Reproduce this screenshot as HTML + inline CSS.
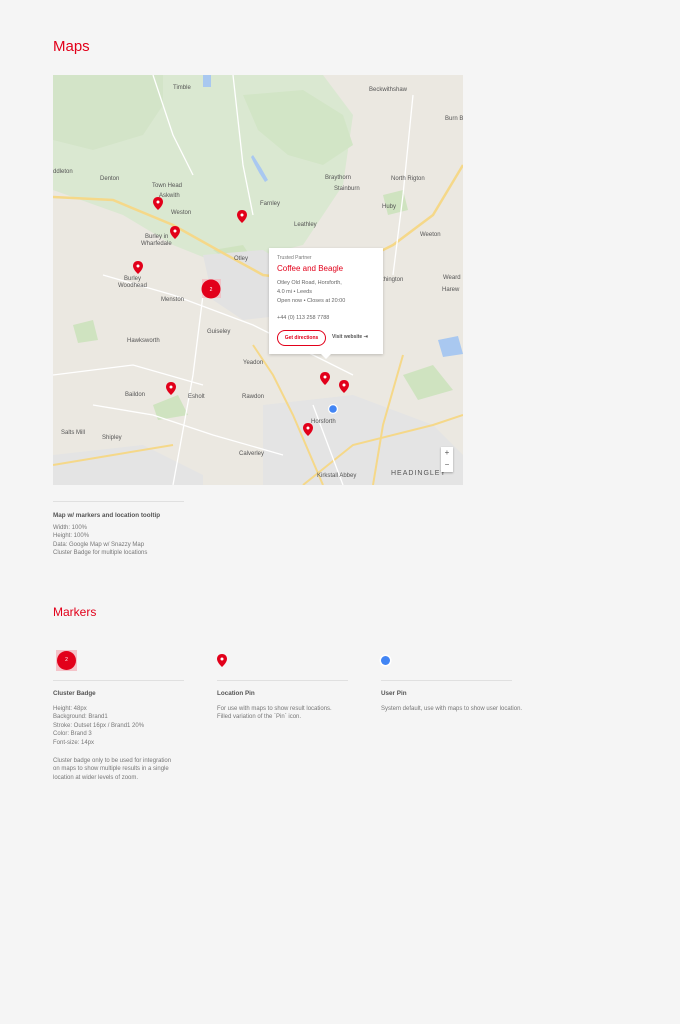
<!DOCTYPE html>
<html><head><meta charset="utf-8"><style>
body{margin:0;background:#f5f5f5;font-family:"Liberation Sans",sans-serif;width:680px;height:1024px;position:relative;overflow:hidden}
.h{position:absolute;left:53px;color:#e2001a;font-size:15px}
.map{position:absolute;left:53px;top:75px;width:410px;height:410px;overflow:hidden;background:#ebe8e1}
.lbl{font-family:"Liberation Sans",sans-serif;font-size:6px;fill:#555}
.tip{position:absolute;left:269px;top:248px;width:114px;height:106px;background:#fff;box-shadow:0 1px 3px rgba(0,0,0,.2);font-size:5px;color:#777}
.tip:after{content:"";position:absolute;left:52px;bottom:-5px;border:5px solid transparent;border-bottom:0;border-top-color:#fff}
.t{position:absolute;left:8px}
.sm{font-size:5.5px;color:#666;line-height:9px}
.rule{position:absolute;height:1px;background:#e0e0e0}
.cap{position:absolute;font-size:6px;color:#777;line-height:8.6px}
.cap b{color:#555;font-size:6.3px}
</style></head><body>
<div class="h" style="top:38px">Maps</div>
<div class="map">
<svg width="410" height="410" viewBox="0 0 410 410">
<path d="M0 0H270L300 40L290 110L250 170L210 180L170 190L120 170L70 140L0 115Z" fill="#dae8d1"/>
<path d="M190 20L250 15L290 40L300 70L270 90L235 80L205 55Z" fill="#d2e5c6"/>
<path d="M0 0H110V30L90 60L40 75L0 65Z" fill="#d3e4c8"/>
<path d="M160 175l30 -5l10 15l-15 8z M330 120l20 -5l5 20l-20 5z M230 260l25 -5l5 20l-25 3z M100 330l25 -10l10 20l-30 5z M350 300l30 -10l20 25l-35 10z M20 250l20 -5l5 20l-20 3z" fill="#cfe3c0"/>
<path d="M150 180L210 175L240 195L250 220L235 240L190 245L160 225Z" fill="#e2e2e2"/>
<path d="M210 330L300 320L380 350L410 380V410H210Z" fill="#e4e4e4"/>
<path d="M0 380L90 370L150 400V410H0Z" fill="#e4e4e4"/>
<path d="M200 80q8 12 15 25l-3 2q-8-12-14-25z M150 0h8v12h-8z M385 265l20 -4l5 18l-20 3z" fill="#a9c8f0"/>
<path d="M0 122L60 125L120 150L170 178L210 200L250 205L300 190L340 170L380 140L410 90" stroke="#f5d889" stroke-width="2.5" fill="none"/>
<path d="M270 410L240 340L220 300L200 270 M250 410L300 370L380 350L410 340 M0 390L60 380L120 370 M320 410L330 350L350 280" stroke="#f5d889" stroke-width="2" fill="none"/>
<path d="M100 0L120 60L140 100 M50 200L120 220L200 250L300 300 M0 300L80 290L150 310 M150 220L140 300L120 410 M360 20L350 120L340 200 M40 330L100 340L160 360L230 380 M260 330L290 410 M180 0L190 90L200 140" stroke="#fff" stroke-width="1.3" fill="none"/>
<text class="lbl" x="120" y="14">Timble</text><text class="lbl" x="316" y="16">Beckwithshaw</text><text class="lbl" x="392" y="45">Burn B</text>
<text class="lbl" x="0" y="98">ddleton</text><text class="lbl" x="47" y="105">Denton</text><text class="lbl" x="99" y="112">Town Head</text><text class="lbl" x="106" y="122">Askwith</text>
<text class="lbl" x="118" y="139">Weston</text><text class="lbl" x="207" y="130">Farnley</text><text class="lbl" x="272" y="104">Braythorn</text><text class="lbl" x="281" y="115">Stainburn</text><text class="lbl" x="338" y="105">North Rigton</text><text class="lbl" x="329" y="133">Huby</text>
<text class="lbl" x="241" y="151">Leathley</text><text class="lbl" x="367" y="161">Weeton</text><text class="lbl" x="92" y="163">Burley in</text><text class="lbl" x="88" y="170">Wharfedale</text>
<text class="lbl" x="181" y="185">Otley</text><text class="lbl" x="71" y="205">Burley</text><text class="lbl" x="65" y="212">Woodhead</text><text class="lbl" x="108" y="226">Menston</text>
<text class="lbl" x="154" y="258">Guiseley</text><text class="lbl" x="74" y="267">Hawksworth</text><text class="lbl" x="190" y="289">Yeadon</text><text class="lbl" x="72" y="321">Baildon</text><text class="lbl" x="135" y="323">Esholt</text><text class="lbl" x="189" y="323">Rawdon</text>
<text class="lbl" x="8" y="359">Salts Mill</text><text class="lbl" x="49" y="364">Shipley</text><text class="lbl" x="186" y="380">Calverley</text><text class="lbl" x="258" y="348">Horsforth</text><text class="lbl" x="264" y="402">Kirkstall Abbey</text>
<text class="lbl" x="338" y="400" style="font-size:7px;letter-spacing:1px">HEADINGLEY</text><text class="lbl" x="327" y="206">rthington</text><text class="lbl" x="389" y="216">Harew</text><text class="lbl" x="390" y="204">Weard</text>
</svg>
<div style="position:absolute;left:388px;top:372px;width:12px;height:25px;background:#fff;box-shadow:0 1px 2px rgba(0,0,0,.3);font-size:8px;text-align:center;line-height:12px;color:#555">+<br>−</div>
</div>
<svg style="position:absolute;left:0;top:0" width="680" height="500">
<defs><g id="p"><path d="M0 -11c-3.3 0-5 2.4-5 5c0 3.5 5 8 5 8s5-4.5 5-8c0-2.6-1.7-5-5-5z" fill="#e2001a"/><circle cy="-6" r="1.5" fill="#fff"/></g></defs>
<use href="#p" x="158" y="208"/><use href="#p" x="175" y="237"/><use href="#p" x="242" y="221"/><use href="#p" x="138" y="272"/><use href="#p" x="171" y="393"/><use href="#p" x="325" y="383"/><use href="#p" x="344" y="391"/><use href="#p" x="308" y="434"/>
<rect x="202" y="279" width="19" height="19" fill="#f4b8bf" opacity=".7"/><circle cx="211" cy="289" r="9.5" fill="#e2001a"/><text x="211" y="291" font-size="5" fill="#fff" text-anchor="middle" font-family="Liberation Sans">2</text>
<circle cx="333" cy="409" r="5" fill="#fff"/><circle cx="333" cy="409" r="3.8" fill="#4285f4"/>
</svg>
<div class="tip">
<div class="t" style="top:7px">Trusted Partner</div>
<div class="t" style="top:16px;color:#e2001a;font-size:8px">Coffee and Beagle</div>
<div class="t sm" style="top:31px">Otley Old Road, Horsforth,<br>4.0 mi • Leeds<br>Open now • Closes at 20:00</div>
<div class="t sm" style="top:66px">+44 (0) 113 258 7788</div>
<div class="t" style="top:82px;width:47px;height:14px;border:1px solid #e2001a;border-radius:8px;color:#e2001a;font-size:5px;font-weight:bold;text-align:center;line-height:14px">Get directions</div>
<div class="t" style="left:63px;top:86px;color:#555;font-weight:bold">Visit website ⇥</div>
</div>
<div class="rule" style="left:53px;top:501px;width:131px"></div>
<div class="cap" style="left:53px;top:512px"><b>Map w/ markers and location tooltip</b><br><div style="height:3px"></div>Width: 100%<br>Height: 100%<br>Data: Google Map w/ Snazzy Map<br>Cluster Badge for multiple locations</div>
<div class="h" style="top:605px;font-size:12px">Markers</div>
<div style="position:absolute;left:56px;top:650px;width:21px;height:21px;background:#f4c3c9"></div>
<div style="position:absolute;left:57px;top:651px;width:19px;height:19px;border-radius:50%;background:#e2001a;color:#fff;font-size:5px;text-align:center;line-height:19px">2</div>
<svg style="position:absolute;left:216px;top:654px" width="12" height="14"><path d="M6 0c-3.3 0-5 2.4-5 5c0 3.5 5 8 5 8s5-4.5 5-8c0-2.6-1.7-5-5-5z" fill="#e2001a"/><circle cx="6" cy="5" r="1.5" fill="#fff"/></svg>
<div style="position:absolute;left:381px;top:656px;width:9px;height:9px;border-radius:50%;background:#4285f4;box-shadow:0 0 0 1.5px #fff"></div>
<div class="rule" style="left:53px;top:680px;width:131px"></div><div class="rule" style="left:217px;top:680px;width:131px"></div><div class="rule" style="left:381px;top:680px;width:131px"></div>
<div class="cap" style="left:53px;top:690px"><b>Cluster Badge</b><br><div style="height:6px"></div>Height: 48px<br>Background: Brand1<br>Stroke: Outset 16px / Brand1 20%<br>Color: Brand 3<br>Font-size: 14px<br><div style="height:9px"></div>Cluster badge only to be used for integration<br>on maps to show multiple results in a single<br>location at wider levels of zoom.</div>
<div class="cap" style="left:217px;top:690px"><b>Location Pin</b><br><div style="height:6px"></div>For use with maps to show result locations.<br>Filled variation of the `Pin` icon.</div>
<div class="cap" style="left:381px;top:690px"><b>User Pin</b><br><div style="height:6px"></div>System default, use with maps to show user location.</div>
</body></html>
